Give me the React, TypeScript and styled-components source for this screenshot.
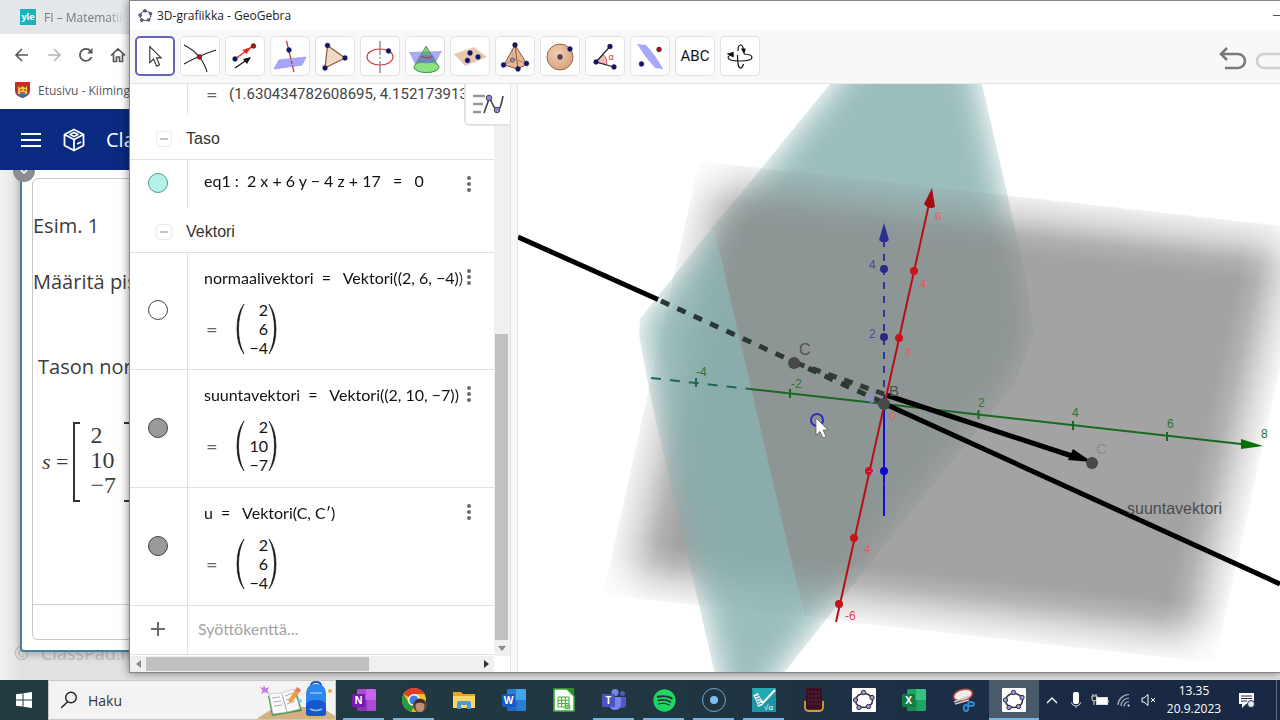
import React from "react";
import styled, { createGlobalStyle, css } from "styled-components";
import { FaSpotify } from "react-icons/fa";

const Global = createGlobalStyle`
  * { box-sizing: border-box; }
  body { margin: 0; font-family: "Open Sans", "Noto Sans", sans-serif; color: #222; background: #cfd2d1; }
  button { font: inherit; color: inherit; padding: 0; border: 0; background: none; cursor: pointer; }
  input { font: inherit; border: 0; outline: 0; background: none; }
  p { margin: 0; }
  svg { display: block; }
`;

const Desktop = styled.div`
  display: flex;
  flex-direction: column;
  height: 100vh;
  overflow: hidden;
`;

const Stage = styled.div`
  position: relative;
  flex: 1;
  min-height: 0;
  overflow: hidden;
`;

/* ---------- browser behind ---------- */

const Browser = styled.section`
  height: 100%;
  display: flex;
  flex-direction: column;
  background: #fff;
`;

const TabStrip = styled.div`
  height: 34px;
  flex: none;
  display: flex;
  align-items: center;
  gap: 8px;
  padding-left: 20px;
  background: #e4e7ea;
  font-size: 12px;
  color: #777a7d;
  white-space: nowrap;
`;

const YleBadge = styled.span`
  width: 16px;
  height: 16px;
  background: #17b4bb;
  color: #fff;
  font-size: 9px;
  font-weight: 700;
  line-height: 15px;
  text-align: center;
`;

const TabTitle = styled.span`
  width: 80px;
  overflow: hidden;
  mask-image: linear-gradient(90deg, #000 80%, transparent);
`;

const NavRow = styled.div`
  height: 40px;
  flex: none;
  display: flex;
  align-items: center;
  gap: 14px;
  padding-left: 13px;
  padding-top: 2px;
  color: #55585b;
`;

const NavButton = styled.button<{ $dim?: boolean }>`
  width: 18px;
  height: 18px;
  ${(p) => p.$dim && css`color: #b5b7b9;`}
`;

const Bookmarks = styled.div`
  height: 35px;
  flex: none;
  display: flex;
  align-items: center;
  gap: 8px;
  padding-left: 15px;
  padding-bottom: 3px;
  font-size: 12px;
`;

const BookmarkLink = styled.a`
  color: #55585b;
  text-decoration: none;
  white-space: nowrap;
`;

const SiteHeader = styled.header`
  position: relative;
  z-index: 2;
  height: 61px;
  flex: none;
  display: flex;
  align-items: center;
  gap: 21px;
  padding-left: 20px;
  background: #0a2a82;
  color: #fff;
  font-size: 20px;
`;

const SiteBody = styled.main`
  position: relative;
  flex: 1;
  min-height: 0;
  padding: 0 20px 28px;
  background: linear-gradient(90deg, #f1f1f1, #e2e2e2 20px);
`;

const Footer = styled.footer`
  position: absolute;
  left: 14px;
  bottom: 15px;
  display: flex;
  align-items: center;
  gap: 12px;
  color: #bcbebe;
  font-size: 18px;
  line-height: 24px;
`;

const Paper = styled.div`
  position: relative;
  height: 100%;
  padding: 8px 10px 10px;
  background: #fff;
  border: 2px solid #43829c;
  border-top: 0;
  border-radius: 0 0 4px 4px;
  box-shadow: 0 2px 8px rgba(0, 0, 0, 0.3);
`;

const FoldButton = styled.button`
  position: absolute;
  left: 13px;
  top: -10px;
  z-index: 1;
  width: 22px;
  height: 22px;
  border-radius: 50%;
  background: #8b8d8f;
  color: #fff;
  display: grid;
  place-items: center;
`;

const Sheet = styled.div`
  height: 100%;
  display: flex;
  flex-direction: column;
  border: 1px solid #c6c8c8;
  border-radius: 6px;
  font-size: 20px;
  line-height: 28px;
  color: #3c3c3c;
`;

const Exercise = styled.div`
  flex: 1;
  padding-top: 33px;
  border-bottom: 1px solid #cccece;
`;

const ExerciseLine = styled.p<{ $gap: number; $indent?: boolean }>`
  margin-bottom: ${(p) => p.$gap}px;
  padding-left: ${(p) => (p.$indent ? 5 : 0)}px;
  white-space: nowrap;
`;

const Formula = styled.div`
  display: flex;
  align-items: center;
  padding-left: 9px;
  gap: 5px;
  font-family: "Liberation Serif", serif;
  font-size: 24px;
`;

const FormulaName = styled.span`
  font-size: 22px;
`;

const Bracketed = styled.div`
  position: relative;
  width: 58px;
  padding: 1px 0 4px 15px;
  line-height: 25px;
  border-left: 2px solid #333;
  border-right: 2px solid #333;
  &::before, &::after {
    content: "";
    position: absolute;
    top: 0;
    bottom: 0;
    width: 5px;
    border-top: 2px solid #333;
    border-bottom: 2px solid #333;
  }
  &::before { left: 0; }
  &::after { right: 0; }
`;

const SheetFooter = styled.div`height: 34px;`;

/* ---------- GeoGebra window ---------- */

const Window = styled.section`
  position: absolute;
  z-index: 3;
  top: 0;
  left: 129px;
  right: 0;
  bottom: 7px;
  display: flex;
  flex-direction: column;
  background: #fff;
  border: solid #84878a;
  border-width: 1px 0 1px 1px;
  box-shadow: 0 0 9px rgba(0, 0, 0, 0.5);
`;

const TitleBar = styled.div`
  height: 29px;
  flex: none;
  display: flex;
  align-items: center;
  gap: 4px;
  padding-left: 8px;
  font-size: 12px;
  color: #222;
`;

const Minimize = styled.button`
  margin-left: auto;
  width: 7px;
  height: 1px;
  background: #555;
`;

const Toolbar = styled.div`
  height: 54px;
  flex: none;
  display: flex;
  align-items: center;
  gap: 5px;
  padding: 0 0 1px 5px;
  background: #f8f8f8;
  border-bottom: 1px solid #e6e6e6;
`;

const Tool = styled.button<{ $active?: boolean }>`
  width: 40px;
  height: 40px;
  flex: none;
  display: grid;
  place-items: center;
  background: #fff;
  border-radius: 5px;
  border: ${(p) => (p.$active ? "2px solid #6564bd" : "1px solid #e2e2e6")};
  font: 15px Roboto, sans-serif;
  color: #111;
`;

const History = styled.div`
  margin-left: auto;
  display: flex;
  gap: 6px;
  width: 62px;
  padding-top: 5px;
  overflow: hidden;
  color: #7a7a7a;
`;

const HistoryButton = styled.button<{ $dim?: boolean }>`
  flex: none;
  ${(p) => p.$dim && css`color: #cfcfcf;`}
`;

const Workspace = styled.div`
  flex: 1;
  min-height: 0;
  display: flex;
`;

const Algebra = styled.div`
  position: relative;
  width: 380px;
  flex: none;
  display: grid;
  grid-template-columns: 1fr 16px;
  grid-template-rows: 1fr 16px;
`;

const List = styled.div`
  min-width: 0;
  min-height: 0;
  display: flex;
  flex-direction: column;
  overflow: hidden;
  font-family: Lato, sans-serif;
  font-size: 16px;
  line-height: 20px;
  color: #111;
`;

const Row = styled.div<{ $h: number; $last?: boolean }>`
  min-height: ${(p) => p.$h}px;
  flex: none;
  display: flex;
  ${(p) => p.$last && css`border-bottom: 1px solid #dde3e2;`}
`;

const Marble = styled.div`
  width: 58px;
  flex: none;
  display: grid;
  place-items: center;
  padding: 0 2px 2px 0;
  border-right: 1px solid #dde3e2;
`;

const MarbleButton = styled.button<{ $fill: string; $line: string }>`
  width: 20px;
  height: 20px;
  border-radius: 50%;
  border: 1px solid ${(p) => p.$line};
  background: ${(p) => p.$fill};
`;

const Body = styled.div<{ $top: number }>`
  position: relative;
  flex: 1;
  min-width: 0;
  padding: ${(p) => p.$top}px 0 0 16px;
`;

const Expression = styled.p`
  width: 266px;
  overflow: hidden;
  white-space: pre;
  mask-image: linear-gradient(90deg, #000 95%, rgba(0, 0, 0, 0.3));
`;

const Result = styled.p`
  display: flex;
  align-items: center;
  gap: 11px;
  padding-left: 2px;
  overflow: hidden;
  white-space: nowrap;
  font-family: Roboto, sans-serif;
  font-size: 15px;
  color: #444;
`;

const EqualsSign = styled.span`
  width: 12px;
  color: #666;
  font-family: Lato, sans-serif;
  font-size: 20px;
`;

const MoreButton = styled.button`
  position: absolute;
  right: 16px;
  top: 14px;
  width: 18px;
  height: 20px;
  display: grid;
  place-items: center;
  color: #6b6b6b;
`;

const Column = styled.div`
  display: flex;
  align-items: center;
  gap: 18px;
  margin-top: 12px;
  padding-left: 2px;
`;

const Matrix = styled.div`
  display: flex;
  align-items: center;
`;

const Entries = styled.div`
  width: 23px;
  text-align: right;
  line-height: 19px;
`;

const Group = styled.div`
  height: 45px;
  flex: none;
  display: flex;
  align-items: center;
  gap: 14px;
  padding: 3px 0 0 26px;
  border-bottom: 1px solid #dde3e2;
  font-family: "Liberation Sans", sans-serif;
  font-size: 16px;
  color: #333;
`;

const Collapse = styled.button`
  width: 16px;
  height: 16px;
  display: grid;
  place-items: center;
  border: 1px solid #ebebeb;
  border-radius: 3px;
  color: #c4c4c4;
`;

const InputField = styled.input`
  width: 100%;
  padding: 0 10px 2px;
  font-size: 16px;
  color: #111;
  &::placeholder { color: #a3a3a3; opacity: 1; }
`;

const VScroll = styled.div`
  display: flex;
  flex-direction: column;
  justify-content: flex-end;
  background: #f0f0f0;
`;

const VThumb = styled.div`
  height: 306px;
  margin: 0 2px 0 1px;
  background: #c1c1c1;
`;

const ScrollArrow = styled.button`
  width: 16px;
  height: 16px;
  display: grid;
  place-items: center;
  color: #8a8a8a;
`;

const HScroll = styled.div`
  display: flex;
  align-items: center;
  background: #f0f0f0;
`;

const HThumb = styled.div`
  width: 223px;
  height: 14px;
  margin-right: auto;
  background: #c1c1c1;
`;

const StyleToggle = styled.button`
  position: absolute;
  top: 0;
  right: 0;
  width: 46px;
  height: 42px;
  display: grid;
  place-items: center;
  background: #fff;
  border: 1px solid #e2e2e2;
  border-width: 0 0 2px 2px;
  border-radius: 0 0 0 6px;
`;

const Divider = styled.div`
  width: 8px;
  flex: none;
  background: #f8f8f8;
  border: solid #e4e4e4;
  border-width: 0 1px;
`;

const View3D = styled.div`
  flex: 1;
  min-width: 0;
  overflow: hidden;
  svg { width: 100%; height: 100%; }
`;

/* ---------- taskbar ---------- */

const Taskbar = styled.footer`
  height: 40px;
  flex: none;
  display: flex;
  background: linear-gradient(90deg, #223b40, #203741 50%, #1b2b46 80%, #182743);
  color: #fff;
`;

const StartButton = styled.button`
  width: 48px;
  display: grid;
  place-items: center;
`;

const Search = styled.label`
  width: 288px;
  flex: none;
  display: flex;
  align-items: center;
  padding-left: 12px;
  gap: 11px;
  background: #f3f3f3;
  border: 1px solid #c8c8c8;
  color: #222;
`;

const SearchInput = styled.input`
  flex: 1;
  min-width: 0;
  padding: 0;
  font-size: 14px;
  &::placeholder { color: #333; opacity: 1; }
`;

const Apps = styled.nav`
  display: flex;
  padding-left: 3px;
`;

const AppButton = styled.button<{ $open?: boolean; $active?: boolean }>`
  width: 50px;
  flex: none;
  display: grid;
  place-items: center;
  background: ${(p) => (p.$active ? "#4a5a69" : "none")};
  position: relative;
  &::after {
    content: "";
    position: absolute;
    bottom: 0;
    left: ${(p) => (p.$active ? 0 : 4)}px;
    right: ${(p) => (p.$active ? 0 : 5)}px;
    height: 2px;
    background: ${(p) => (p.$open || p.$active ? "#76b4e4" : "none")};
  }
`;

const Tray = styled.div`
  margin-left: auto;
  display: flex;
  align-items: center;
  padding-right: 3px;
`;

const TrayButton = styled.button`
  width: 24px;
  height: 40px;
  display: grid;
  place-items: center;
`;

const Clock = styled.time`
  width: 66px;
  margin-left: 1px;
  font-size: 12px;
  line-height: 18px;
  text-align: center;
`;

const Notices = styled.button`
  width: 40px;
  height: 40px;
  display: grid;
  place-items: center;
`;

const PeekEdge = styled.span`
  width: 1px;
  height: 40px;
  margin-left: 9px;
  background: #5d6b80;
`;

/* ---------- drawings ---------- */

const Ring = ({ size, dot = "#8f86e0" }: { size: number; dot?: string }) => (
  <svg width={size} height={size} viewBox="0 0 24 24">
    <ellipse cx="12" cy="12.500" rx="8.500" ry="7.500" fill="none" stroke="#444" strokeWidth="1.600" />
    {[[11, 4.5], [20, 9], [17, 19], [6, 19.5], [3.500, 11.500]].map(([x, y]) => (
      <circle key={x} cx={x} cy={y} r="2.300" fill={dot} stroke="#333" strokeWidth="1" />
    ))}
  </svg>
);

const GgbTile = () => (
  <svg width="24" height="24" viewBox="0 0 24 24">
    <rect width="24" height="24" rx="1" fill="#fff" />
    <ellipse cx="12" cy="12.500" rx="8.500" ry="7" fill="none" stroke="#333" strokeWidth="1.500" />
    {[[11.500, 4.500], [20, 9.500], [16.500, 18.500], [7, 19.500], [3.500, 12]].map(([x, y]) => (
      <circle key={x} cx={x} cy={y} r="2.200" fill="#9a92e8" stroke="#333" strokeWidth="1" />
    ))}
  </svg>
);

const navy = "#12127d";
const Dot = ({ x, y, c = navy }: { x: number; y: number; c?: string }) => (
  <circle cx={x} cy={y} r="2.400" fill={c} stroke="#222" strokeWidth=".5" />
);

const toolArt: [string, React.ReactNode][] = [
  ["Siirrä", <path d="M13.500 9v17l4-3.800 3.300 7.500 3-1.400-3.300-7.300h5z" fill="#fff" stroke="#333" strokeWidth="1.200" />],
  ["Leikkauspiste", <><path d="M3 8q18 9 23 27M3 27q14-8 32-14" fill="none" stroke="#222" strokeWidth="1.100" /><Dot x={18.500} y={20} c="#b01818" /></>],
  ["Vektori", <><path d="M9 22 27 9" stroke="#e22" strokeWidth="1.300" /><path d="m25 10-4.500 7-4-4z" fill="#e22" /><path d="m9 31 11-7.500" stroke="#111" strokeWidth="1.200" /><path d="m25 20-8 2 4 5z" fill="#111" /><Dot x={9} y={22} /><Dot x={27.500} y={9} c="#a11" /></>],
  ["Kohtisuora suora", <><path d="m3 32 5-9 27-3-4 8z" fill="#a5a4f6" stroke="#a5a4f6" strokeWidth="1" strokeLinejoin="round" /><path d="M15.500 4l7.500 31" stroke="#b33" strokeWidth="1.200" strokeDasharray="19 1.500 3 1.500 20" /><Dot x={18} y={13} /></>],
  ["Monikulmio", <><path d="M11.500 8.500 29 21 9 31z" fill="#f2d9c6" stroke="#8a5a3a" strokeWidth="1.200" /><Dot x={11.500} y={8.500} /><Dot x={29} y={21} /><Dot x={9} y={31} /></>],
  ["Ympyrä", <><ellipse cx="19" cy="20" rx="13" ry="8" fill="none" stroke="#c33" strokeWidth="1.200" /><path d="M19 4v14M19 20v2M19 24v12" stroke="#888" strokeWidth="1.400" /><Dot x={27.500} y={14} /></>],
  ["Leikkauskäyrä", <><path d="m3 15 33-1-6 11-21 2z" fill="#a9a8f5" /><path d="M20 9 8 30a12.500 5.500 0 0 0 25 0z" fill="#45b24d" fillOpacity=".65" stroke="#3b8f44" strokeWidth=".8" /><ellipse cx="20.500" cy="30" rx="12.500" ry="5.500" fill="#8ee284" stroke="#3b8f44" strokeWidth=".8" /><path d="m14.500 18-3.500 6q9 5 19 0l-3.500-6z" fill="#6f7fc0" fillOpacity=".8" /><path d="M14.500 19.500q6 3 12 0" fill="none" stroke="#b34" /></>],
  ["Taso", <><path d="m3 17 20-7 13 10-22 9z" fill="#e5c7b4" /><Dot x={19} y={16} /><Dot x={27} y={20} /><Dot x={16.500} y={23.500} /></>],
  ["Pyramidi", <><path d="M19 8 8 28l14 4 9-5z" fill="#e5b795" stroke="#8a5a3a" /><path d="m19 8 3 24" stroke="#8a5a3a" /><path d="m8 28 11-6 12 5" fill="none" stroke="#a87a5a" strokeWidth=".8" /><path d="M16.500 14v8" stroke="#b98" strokeDasharray="2 1.500" /><circle cx="16.500" cy="23" r="2" fill="#a99bb8" stroke="#555" /><Dot x={19} y={8} /><Dot x={7.500} y={28} /><Dot x={22} y={32} /><Dot x={30.500} y={26.500} /></>],
  ["Pallo", <><circle cx="19" cy="20" r="13" fill="url(#ball)" stroke="#9a6a4a" /><circle cx="19" cy="20" r="2.400" fill="#5a3c5c" stroke="#222" strokeWidth=".5" /><Dot x={29} y={12} /></>],
  ["Kulma", <><path d="M10 25 17 17.500q5 4 3.500 10.500z" fill="#f6b9bb" stroke="#c44" strokeWidth=".8" /><path d="M24 9.500 10 25l18 5" fill="none" stroke="#222" strokeWidth="1.200" /><Dot x={24} y={9.500} /><Dot x={10} y={25} /><Dot x={28} y={30} /><text x="22.500" y="23" fill="#c33" fontSize="9" fontFamily="Liberation Sans">α</text></>],
  ["Peilaus", <><path d="m6 7 9 1q11 12 17 24l-8-1Q14 20 6 7z" fill="#a9a8f8" /><Dot x={10.500} y={27} /><Dot x={28} y={12.500} c="#a11" /></>],
];

const ToolPaints = () => (
  <svg width="0" height="0" aria-hidden="true">
    <defs>
      <radialGradient id="ball" cx=".4" cy=".35" r=".7">
        <stop offset="0" stopColor="#f0cfb4" /><stop offset="1" stopColor="#d9a17a" />
      </radialGradient>
    </defs>
  </svg>
);

const Paren = ({ right }: { right?: boolean }) => (
  <svg width="9" height="52" viewBox="0 0 9 52">
    <path
      d={right ? "M1 1Q8 10 8 26T1 51Q6.500 40 6.500 26T1 1z" : "M8 1Q1 10 1 26T8 51Q2.500 40 2.500 26T8 1z"}
      fill="#111" stroke="#111" strokeWidth=".6"
    />
  </svg>
);

const Dots = () => (
  <svg width="6" height="18" viewBox="0 0 6 18" fill="currentColor">
    <circle cx="3" cy="3" r="2" /><circle cx="3" cy="9" r="2" /><circle cx="3" cy="15" r="2" />
  </svg>
);

const tealShape = "855,45 972,45 982,84 1008,197 1028,290 1034,335 1014,385 869,565 784,673 757,710 724,710 715,674 652,404 639,335 640,319 711,229 760,170 830,84";

const Space = () => (
  <svg viewBox="518 84 762 589" preserveAspectRatio="xMinYMin slice" fontFamily="Liberation Sans, sans-serif">
    <defs>
      <linearGradient id="fadeU">
        <stop offset="0" stopColor="#8a8a8a" stopOpacity=".1" />
        <stop offset=".03" stopColor="#8a8a8a" stopOpacity=".3" />
        <stop offset=".07" stopColor="#8a8a8a" stopOpacity=".66" />
        <stop offset=".1" stopColor="#8a8a8a" stopOpacity=".79" />
        <stop offset=".9" stopColor="#8a8a8a" stopOpacity=".79" />
        <stop offset=".93" stopColor="#8a8a8a" stopOpacity=".66" />
        <stop offset=".97" stopColor="#8a8a8a" stopOpacity=".3" />
        <stop offset="1" stopColor="#8a8a8a" stopOpacity=".06" />
      </linearGradient>
      <linearGradient id="fadeV" x2="0" y2="1">
        <stop offset="0" stopColor="#fff" stopOpacity=".16" />
        <stop offset=".04" stopColor="#fff" stopOpacity=".42" />
        <stop offset=".09" stopColor="#fff" stopOpacity=".86" />
        <stop offset=".13" stopColor="#fff" />
        <stop offset=".87" stopColor="#fff" />
        <stop offset=".91" stopColor="#fff" stopOpacity=".8" />
        <stop offset=".96" stopColor="#fff" stopOpacity=".36" />
        <stop offset="1" stopColor="#fff" stopOpacity=".1" />
      </linearGradient>
      <mask id="greyMask"><rect width="100" height="100" fill="url(#fadeV)" /></mask>
      <filter id="soft" filterUnits="userSpaceOnUse" x="560" y="0" width="560" height="780">
        <feGaussianBlur stdDeviation="12" />
      </filter>
      <mask id="tealMask" maskUnits="userSpaceOnUse" x="560" y="0" width="560" height="780">
        <g filter="url(#soft)">
          <polygon points={tealShape} fill="#fff" stroke="#000" strokeWidth="28" />
        </g>
      </mask>
      <clipPath id="tealEdge"><polygon points={tealShape} /></clipPath>
      <clipPath id="front"><polygon points="714,229 804,616 850,621 850,720 600,720 600,229" /></clipPath>
      <clipPath id="back"><polygon points="600,229 714,229 804,616 850,621 1100,650 1100,40 600,40" /></clipPath>
    </defs>

    <g clipPath="url(#back)"><g clipPath="url(#tealEdge)">
      <rect x="600" y="40" width="480" height="640" fill="#85b0ae" fillOpacity=".82" mask="url(#tealMask)" />
    </g></g>
    <g transform="matrix(6.120 .68 -.96 4.340 699 161)">
      <rect width="100" height="100" fill="url(#fadeU)" mask="url(#greyMask)" />
    </g>
    <g clipPath="url(#front)"><g clipPath="url(#tealEdge)">
      <rect x="600" y="40" width="480" height="640" fill="#85b0ae" fillOpacity=".82" mask="url(#tealMask)" />
    </g></g>

    <g stroke="#17691f" strokeWidth="2" fontSize="12">
      <path d="M651 378 750 389" stroke="#1f6657" strokeDasharray="10 9" />
      <path d="M750 389 1250 445" />
      <path d="M696 378v9" stroke="#1f6657" />
      <path d="M790 389v9M978.500 410v9M1073 421v9M1167 432v9" />
      <path d="m1263 446-22-7v10z" fill="#067006" stroke="none" />
      <g stroke="none" fill="#2d7233">
        <text x="696" y="376">-4</text><text x="791" y="388">-2</text><text x="978" y="407">2</text>
        <text x="1072" y="417">4</text><text x="1167" y="428">6</text><text x="1261" y="438">8</text>
      </g>
    </g>

    <g fill="none" stroke="#33339a" strokeWidth="2">
      <path d="M884 240v160" strokeDasharray="7 7" />
      <path d="M884 404v112" stroke="#1010d8" />
      <path d="m884 223-5 17q5 5 10 0z" fill="#2b2f92" stroke="none" />
      <circle cx="884" cy="269" r="4" fill="#29298a" stroke="none" />
      <circle cx="884" cy="337" r="4" fill="#29298a" stroke="none" />
      <circle cx="884" cy="471" r="4" fill="#0a0ad0" stroke="none" />
      <g stroke="none" fill="#4a4aa0" fontSize="12">
        <text x="869" y="269">4</text><text x="869" y="338">2</text>
      </g>
    </g>

    <g stroke="#000" strokeWidth="5">
      <path d="M518 237 658 299.500" />
      <path d="M661 301 884 403" stroke="#2a3835" strokeDasharray="9 9" />
      <path d="M796 363 884 394" stroke="#333b39" strokeDasharray="9 8" />
      <path d="M884 403.500 1280 584" />
      <path d="M886 395 1072 456" />
      <path d="m1092 462-19-13-5 11z" stroke="none" />
    </g>

    <g stroke="#b90f14" strokeWidth="2">
      <path d="M836 622 929 204" />
      <path d="M932 188 924 204q5 6 11 3z" fill="#a80c10" stroke="none" />
      <g fill="#c8141a" stroke="none">
        <circle cx="914" cy="271" r="4" /><circle cx="899" cy="338" r="4" /><circle cx="869" cy="471" r="4" />
        <circle cx="854" cy="538" r="4" /><circle cx="839" cy="604" r="4" />
      </g>
      <g stroke="none" fill="#f2555b" fontSize="11">
        <text x="935" y="220">6</text><text x="920" y="288">4</text><text x="905" y="356">2</text>
        <text x="890" y="420">0</text><text x="864" y="553">4</text>
        <text x="845" y="620" fontSize="12" fill="#e2434a">-6</text>
      </g>
      <text x="868" y="474" stroke="none" fill="#b48cff" fontSize="9">-2</text>
      <text x="881" y="486" stroke="none" fill="#f26d92" fontSize="9">-</text>
    </g>
    <text x="868" y="403" fill="#8c8cf0" fontSize="12">0</text>
    <g fill="#484848">
      <circle cx="794" cy="363" r="6" /><circle cx="884" cy="404" r="6" /><circle cx="1092" cy="463" r="6" />
    </g>
    <g fill="#4c5250" fontSize="16">
      <text x="799" y="355">C</text>
      <text x="889" y="396" fontSize="15">B</text>
      <text x="1096" y="454" fontSize="15" fill="#8c8c8c">C</text>
      <text x="1127" y="514" fill="#4c4c4c">suuntavektori</text>
    </g>
    <circle cx="817" cy="420" r="6" fill="none" stroke="#2c2cc4" strokeWidth="2" />
    <path d="M816 418v17l4-3.500 3 6.500 3-1.500-3-6.500h5z" fill="#fff" stroke="#555" strokeWidth=".7" />
  </svg>
);

/* ---------- content ---------- */

type Vector = { expr: string; values: string[]; fill: string; h: number };

const vectors: Vector[] = [
  { expr: "normaalivektori  =   Vektori((2, 6, −4))", values: ["2", "6", "−4"], fill: "#fff", h: 117 },
  { expr: "suuntavektori  =   Vektori((2, 10, −7))", values: ["2", "10", "−7"], fill: "#999", h: 118 },
  { expr: "u  =   Vektori(C, C′)", values: ["2", "6", "−4"], fill: "#999", h: 118 },
];

const VectorRow = ({ expr, values, fill, h }: Vector) => (
  <Row $h={h} $last>
    <Marble><MarbleButton $fill={fill} $line="#444" aria-label="Näytä tai piilota" /></Marble>
    <Body $top={15}>
      <Expression>{expr}</Expression>
      <Column>
        <EqualsSign>=</EqualsSign>
        <Matrix>
          <Paren />
          <Entries>{values.map((v) => <div key={v}>{v}</div>)}</Entries>
          <Paren right />
        </Matrix>
      </Column>
      <MoreButton aria-label="Lisää"><Dots /></MoreButton>
    </Body>
  </Row>
);

const GroupHeader = ({ name }: { name: string }) => (
  <Group>
    <Collapse aria-label={`Tiivistä ${name}`}>
      <svg width="8" height="2"><rect width="8" height="2" fill="currentColor" /></svg>
    </Collapse>
    {name}
  </Group>
);

const letterTile = (letter: string, dark: string, a: string, b: string) => (
  <svg width="26" height="24" viewBox="0 0 26 24">
    <rect x="6" y="1" width="19" height="22" rx="1.500" fill={a} />
    <path d="M15 1h8.500a1.500 1.500 0 0 1 1.500 1.500V12H15z" fill={b} />
    <path d="M6 12h10v11H7.500A1.500 1.500 0 0 1 6 21.500z" fill={dark} fillOpacity=".55" />
    <rect x="1" y="6" width="13" height="13" rx="1" fill={dark} />
    <text x="7.500" y="16" fontSize="10" fontWeight="700" fill="#fff" textAnchor="middle" fontFamily="Open Sans">{letter}</text>
  </svg>
);

const apps: { name: string; open?: boolean; active?: boolean; art: React.ReactNode }[] = [
  { name: "OneNote", open: true, art: letterTile("N", "#7719aa", "#ae4bd5", "#ca64ea") },
  {
    name: "Chrome", open: true, art: (
      <svg width="26" height="26" viewBox="0 0 26 26">
        <circle cx="13" cy="13" r="12" fill="#fbc116" />
        <path d="M13 13 2.600 7A12 12 0 0 1 23.400 7H13z" fill="#e33b2e" />
        <path d="M2.600 7 8 16.500l5 3L10.500 24.800A12 12 0 0 1 2.600 7z" fill="#249a41" />
        <circle cx="13" cy="13" r="6" fill="#fff" /><circle cx="13" cy="13" r="4.600" fill="#3f7fe8" />
        <circle cx="19" cy="18.500" r="7" fill="#5c4636" /><ellipse cx="19" cy="19.500" rx="4.500" ry="5.500" fill="#bf8e74" />
        <path d="M14 17q1-5 5-5t5 5q-5-3-10 0z" fill="#3a2d27" />
      </svg>
    ),
  },
  {
    name: "Resurssienhallinta", art: (
      <svg width="24" height="20" viewBox="0 0 24 20">
        <path d="M1 2h8l2 2h12v14H1z" fill="#e5a51c" /><path d="M1 6h22v12H1z" fill="#fbd768" />
        <path d="M5 19v-6q0-2 2-2h10q2 0 2 2v6h-4v-4H9v4z" fill="#4d9ad6" />
      </svg>
    ),
  },
  { name: "Word", art: letterTile("W", "#185abd", "#2b7cd3", "#41a5ee") },
  {
    name: "LibreOffice Calc", art: (
      <svg width="22" height="24" viewBox="0 0 22 24">
        <path d="M1 1h13l7 7v15H1z" fill="#fff" stroke="#3cae2f" strokeWidth="1.500" /><path d="M13 0h8v8z" fill="#2f8f25" />
        <path d="M5 9h11v10H5zM5 12.300h11M5 15.600h11M8.600 9v10M12.300 9v10" fill="none" stroke="#3cae2f" />
        <path d="M12 17h5v4h-5z" fill="#7cc870" stroke="#3cae2f" strokeWidth=".6" />
      </svg>
    ),
  },
  {
    name: "Teams", open: true, art: (
      <svg width="26" height="24" viewBox="0 0 26 24">
        <circle cx="14" cy="4.500" r="3.500" fill="#7b83eb" /><circle cx="21.500" cy="5.500" r="2.500" fill="#5059c9" />
        <path d="M17 9h8v7q0 4-4 4h-4z" fill="#5059c9" /><path d="M8 9h12v8q-1 5-6 5t-6-5z" fill="#7b83eb" />
        <rect x="1" y="6" width="13" height="13" rx="1" fill="#4b53bc" />
        <text x="7.500" y="16" fontSize="10" fontWeight="700" fill="#fff" textAnchor="middle" fontFamily="Open Sans">T</text>
      </svg>
    ),
  },
  { name: "Spotify", open: true, art: <FaSpotify size={23} color="#1ed760" /> },
  {
    name: "Tallennin", open: true, art: (
      <svg width="26" height="26" viewBox="0 0 26 26">
        <circle cx="13" cy="13" r="11.500" fill="none" stroke="#74a9cc" /><circle cx="13" cy="13" r="4" fill="#7cc0f2" />
      </svg>
    ),
  },
  {
    name: "ClassPad", open: true, art: (
      <svg width="24" height="24" viewBox="0 0 24 24">
        <rect width="24" height="24" fill="#1a97a0" /><path d="M0 0h24L10 16z" fill="#22abb0" />
        <path d="m1 7 5-2q3 5 5 12l-5 2Q4 12 1 7z" fill="#e8f4f4" /><path d="m3 9 4-1.500M4 11.500l4-1.500M5 14l4-1.500M6 16.500l4-1.500" stroke="#2a8890" />
        <path d="m9 12 2 3L23 2" fill="none" stroke="#fff" strokeWidth="2" />
        <text x="12" y="22" fontSize="8" fill="#fff" fontFamily="Liberation Sans">√α</text>
      </svg>
    ),
  },
  {
    name: "Laskin", art: (
      <svg width="24" height="26" viewBox="0 0 24 26">
        <path d="M3 14v6q0 4 4 4h10q4 0 4-4v-6" fill="#4a2a22" stroke="#d89a3e" strokeWidth="1.800" />
        <rect x="4" y="1" width="16" height="21" rx="1" fill="#3b1022" />
        <path d="M6 5h12M6 9h12M6 13h12M6 17h12" stroke="#5a2438" strokeWidth="1.500" strokeDasharray="2 1.500" />
      </svg>
    ),
  },
  { name: "GeoGebra", art: <GgbTile /> },
  { name: "Excel", art: letterTile("X", "#107c41", "#21a366", "#33c481") },
  {
    name: "Kuvankaappaustyökalu", art: (
      <svg width="26" height="26" viewBox="0 0 26 26">
        <ellipse cx="12" cy="8" rx="9.500" ry="5.500" fill="#f3eeee" stroke="#cc4a44" strokeWidth="1.500" transform="rotate(-15 12 8)" />
        <path d="m3 15 15-6M4 17l14-4" stroke="#c9ccd2" strokeWidth="1.500" />
        <ellipse cx="15" cy="21" rx="2.300" ry="3" fill="none" stroke="#2f8fd6" strokeWidth="1.800" />
        <ellipse cx="20" cy="17" rx="3" ry="2" fill="none" stroke="#2f8fd6" strokeWidth="1.800" />
      </svg>
    ),
  },
  { name: "GeoGebra 3D", active: true, art: <GgbTile /> },
];

const stroke = { fill: "none", stroke: "currentColor" };

export default function App() {
  return (
    <Desktop>
      <Global />
      <ToolPaints />
      <Stage>
        <Browser>
          <TabStrip>
            <YleBadge>yle</YleBadge>
            <TabTitle>FI – Matematiikka</TabTitle>
          </TabStrip>
          <NavRow>
            <NavButton aria-label="Takaisin">
              <svg width="18" height="18" {...stroke} strokeWidth="1.600"><path d="M15 9H3M9 3 3 9l6 6" /></svg>
            </NavButton>
            <NavButton aria-label="Eteenpäin" $dim>
              <svg width="18" height="18" {...stroke} strokeWidth="1.600"><path d="M3 9h12M9 3l6 6-6 6" /></svg>
            </NavButton>
            <NavButton aria-label="Päivitä">
              <svg width="18" height="18" {...stroke} strokeWidth="1.800"><path d="M14.500 11A6 6 0 1 1 13.500 5L15 7" /><path d="M15.500 2v5.500H10z" fill="currentColor" stroke="none" /></svg>
            </NavButton>
            <NavButton aria-label="Etusivu">
              <svg width="18" height="18" {...stroke} strokeWidth="1.700"><path d="M2 9.500 9 3l7 6.500M4.500 8v7.500h3V11h3v4.500h3V8" /></svg>
            </NavButton>
          </NavRow>
          <Bookmarks>
            <svg width="15" height="16" viewBox="0 0 15 16">
              <path d="M0 0h15v9q0 5-7.500 7Q0 14 0 9z" fill="#cf2a27" /><path d="M1 10h13q-1 4-6.500 6Q2 14 1 10z" fill="#3d6fae" />
              <path d="M3 4 5 6l2.500-2L10 6l2-2v8H3z" fill="#f7c82d" /><path d="M5 8h2M9 8h2M5 11h5" stroke="#703" />
            </svg>
            <BookmarkLink href="#etusivu">Etusivu - Kiimingin</BookmarkLink>
          </Bookmarks>
          <SiteHeader>
            <svg width="22" height="16" stroke="#fff" strokeWidth="2"><path d="M1 2h20M1 8h20M1 14h20" /></svg>
            <svg width="22" height="24" viewBox="0 0 22 24" fill="none" stroke="#fff" strokeWidth="1.800" strokeLinejoin="round">
              <path d="M11 1.500 20.500 6.500v11L11 22.500l-9.500-5v-11zM1.500 6.500 11 11.500l9.500-5M11 11.500v11" /><path d="m7 6.500 4-2 4 2-4 2zM14 16l4-2" strokeWidth="1.500" />
            </svg>
            ClassPad
          </SiteHeader>
          <SiteBody>
            <Footer><span>©</span><span>ClassPad.net</span></Footer>
            <FoldButton aria-label="Pienennä">
              <svg width="10" height="6" {...stroke} strokeWidth="1.500"><path d="m1 1 4 4 4-4" /></svg>
            </FoldButton>
            <Paper>
              <Sheet>
                <Exercise>
                  <ExerciseLine $gap={28}>Esim. 1</ExerciseLine>
                  <ExerciseLine $gap={57}>Määritä pisteen</ExerciseLine>
                  <ExerciseLine $gap={41} $indent>Tason normaali</ExerciseLine>
                  <Formula>
                    <FormulaName><i>s</i> =</FormulaName>
                    <Bracketed><div>2</div><div>10</div><div>−7</div></Bracketed>
                  </Formula>
                </Exercise>
                <SheetFooter />
              </Sheet>
            </Paper>
          </SiteBody>
        </Browser>

        <Window>
          <TitleBar>
            <Ring size={15} dot="#6d67a8" />
            3D-grafiikka - GeoGebra
            <Minimize aria-label="Pienennä ikkuna" />
          </TitleBar>
          <Toolbar>
            {toolArt.map(([name, art], i) => (
              <Tool key={name} $active={i === 0} aria-label={name}>
                <svg width={i === 0 ? 36 : 38} height={i === 0 ? 36 : 38} viewBox="0 0 38 38">{art}</svg>
              </Tool>
            ))}
            <Tool>ABC</Tool>
            <Tool aria-label="Kierrä 3D-näkymää">
              <svg width="38" height="38" viewBox="0 0 38 38" fill="none" stroke="#111" strokeWidth="1.200">
                <path d="M13 17.500Q7 18.500 7 20.500q0 3.500 12 3.500t12-3.500q0-3-8-3.500" /><path d="M17 14q0-6 2.500-6 2.500 0 3 5M16.500 18q0 13 3 13 2 0 3-4" />
                <path d="m7 17 5-1.500v4zM21 12h3l-1 4z" fill="#111" />
              </svg>
            </Tool>
            <History>
              <HistoryButton aria-label="Kumoa">
                <svg width="30" height="26" {...stroke} strokeWidth="2.600"><path d="M9 2 3 8l6 6M3 8h17a7 7 0 0 1 0 14H7" /></svg>
              </HistoryButton>
              <HistoryButton aria-label="Tee uudelleen" $dim>
                <svg width="36" height="26" {...stroke} strokeWidth="2.600"><path d="m28 2 6 6-6 6M33 8H10a7 7 0 0 0 0 14h18" /></svg>
              </HistoryButton>
            </History>
          </Toolbar>

          <Workspace>
            <Algebra>
              <List>
                <Row $h={31}>
                  <Marble />
                  <Body $top={0}>
                    <Result><EqualsSign>=</EqualsSign>(1.630434782608695, 4.152173913043</Result>
                  </Body>
                </Row>
                <GroupHeader name="Taso" />
                <Row $h={48}>
                  <Marble><MarbleButton $fill="#b4f1ea" $line="#4f9a94" aria-label="Näytä tai piilota eq1" /></Marble>
                  <Body $top={11}>
                    <Expression>{"eq1 :  2 x + 6 y − 4 z + 17   =   0"}</Expression>
                    <MoreButton aria-label="Lisää"><Dots /></MoreButton>
                  </Body>
                </Row>
                <GroupHeader name="Vektori" />
                {vectors.map((v) => <VectorRow key={v.expr} {...v} />)}
                <Row $h={49} $last>
                  <Marble><svg width="14" height="14" stroke="#6b6b6b" strokeWidth="2"><path d="M7 0v14M0 7h14" /></svg></Marble>
                  <InputField aria-label="Syöttökenttä" placeholder="Syöttökenttä..." />
                </Row>
              </List>
              <VScroll>
                <VThumb />
                <ScrollArrow aria-label="Vieritä alas"><svg width="8" height="5"><path d="M0 0h8L4 5z" fill="currentColor" /></svg></ScrollArrow>
              </VScroll>
              <HScroll>
                <ScrollArrow aria-label="Vieritä vasemmalle"><svg width="5" height="8"><path d="M5 0v8L0 4z" fill="currentColor" /></svg></ScrollArrow>
                <HThumb />
                <ScrollArrow aria-label="Vieritä oikealle"><svg width="5" height="8"><path d="M0 0v8l5-4z" fill="#333" /></svg></ScrollArrow>
              </HScroll>
              <StyleToggle aria-label="Tyylipalkki">
                <svg width="32" height="22" viewBox="0 0 32 22" fill="none">
                  <path d="M1 3h12M1 11h10M1 19h8" stroke="#999" strokeWidth="2.400" />
                  <path d="M12 20 17 6q1-1 3 4t5 7 6-14" stroke="#444" strokeWidth="1.600" />
                  <circle cx="17" cy="5" r="2.800" fill="#8f86e0" stroke="#444" /><circle cx="25" cy="17" r="2.800" fill="#8f86e0" stroke="#444" />
                </svg>
              </StyleToggle>
            </Algebra>
            <Divider />
            <View3D><Space /></View3D>
          </Workspace>
        </Window>
      </Stage>

      <Taskbar>
        <StartButton aria-label="Käynnistä">
          <svg width="16" height="16" fill="#fff"><path d="M0 2.300 6.500 1.400v6.100H0zM7.500 1.300 16 0v7.500H7.500zM0 8.500h6.500v6.100L0 13.700zM7.500 8.500H16V16l-8.500-1.200z" /></svg>
        </StartButton>
        <Search>
          <svg width="16" height="18" fill="none" stroke="#222" strokeWidth="1.400"><circle cx="10" cy="6.500" r="5.300" /><path d="M6.500 11 0 17" /></svg>
          <SearchInput aria-label="Haku" placeholder="Haku" />
          <svg width="78" height="38" viewBox="0 0 78 38">
            <path d="M0 38q2-2 4-3l14-9h46l14 9v3z" fill="#d6b083" />
            <path d="m11 15 28-6 6 21-30 5z" fill="#3f9a4b" /><path d="m12 13 13-1 12-4 6 20-13 3-14 2z" fill="#fafafa" stroke="#bbb" strokeWidth=".6" />
            <path d="m25 13 5 18M15 17l8-1M16 21l8-1M17 25l8-1M28 15l8-3M29 19l8-3M30 23l8-3" stroke="#aab" />
            <path d="m31 20 7-11 4 3-8 10z" fill="#f29a3a" /><path d="m38 9 2-3 4 3-2 3z" fill="#e8776f" />
            <path d="m7 4 1.500 3.500L12 6l-1.500 3.500L12 13 8 11l-4 2 1.500-3.500L3 6l3 1z" fill="#c47fe0" />
            <circle cx="43" cy="20" r="2" fill="#7fd0e8" /><circle cx="73" cy="10" r="2" fill="#e8b23a" />
            <path d="M54 5q0-4 5-4t5 4" fill="none" stroke="#1a56c0" strokeWidth="2" />
            <path d="M49 14q0-11 10-11t10 11v18q0 3-3 3H52q-3 0-3-3z" fill="#2d86ee" />
            <path d="M49 25q0-6 10-6t10 6v7q0 3-3 3H52q-3 0-3-3z" fill="#1557d0" /><path d="M53 12h12M53 28q6 3 12 0" stroke="#8ac2ff" strokeWidth="1.500" fill="none" />
          </svg>
        </Search>
        <Apps>
          {apps.map((a) => (
            <AppButton key={a.name} $open={a.open} $active={a.active} aria-label={a.name}>{a.art}</AppButton>
          ))}
        </Apps>
        <Tray>
          <TrayButton aria-label="Näytä piilotetut kuvakkeet">
            <svg width="12" height="8" {...stroke} strokeWidth="1.300"><path d="m1 7 5-5 5 5" /></svg>
          </TrayButton>
          <TrayButton aria-label="Mikrofoni">
            <svg width="10" height="16"><rect x="2" width="6" height="12" rx="2" fill="#fff" /><path d="M0 10q1 4 5 4t5-4M5 14v2" fill="none" stroke="#ccc" /></svg>
          </TrayButton>
          <TrayButton aria-label="Akku">
            <svg width="18" height="14"><rect x="5.500" y="4.500" width="11" height="7" fill="#fff" stroke="#ddd" /><path d="M17 7v3M1 3h5v3q-1 2-3 2t-2-2zM2 1v2M5 1v2M3 8v4" stroke="#ddd" fill="none" /></svg>
          </TrayButton>
          <TrayButton aria-label="Verkko">
            <svg width="14" height="14" fill="none" stroke="#aeb6c2" strokeWidth="1.200"><path d="M1 12A11 11 0 0 1 12 1.500M4 13a8 8 0 0 1 8-8M7 13.500a5 5 0 0 1 5-5" /><circle cx="11.500" cy="12.500" r="1" fill="#fff" stroke="none" /></svg>
          </TrayButton>
          <TrayButton aria-label="Ääni mykistetty">
            <svg width="15" height="12" {...stroke}><path d="M1 4h2l4-3.500v11L3 8H1zM10 4l4 4M14 4l-4 4" /></svg>
          </TrayButton>
          <Clock>13.35<br />20.9.2023</Clock>
          <Notices aria-label="Ilmoitukset">
            <svg width="18" height="17"><path d="M1 1h15v11H8l-4 4v-4H1z" fill="#fff" /><path d="M3 4h11M3 6.500h11M3 9h6" stroke="#22304a" /><circle cx="13" cy="12" r="3.500" fill="#e6e9ee" stroke="#22304a" /></svg>
          </Notices>
          <PeekEdge />
        </Tray>
      </Taskbar>
    </Desktop>
  );
}
